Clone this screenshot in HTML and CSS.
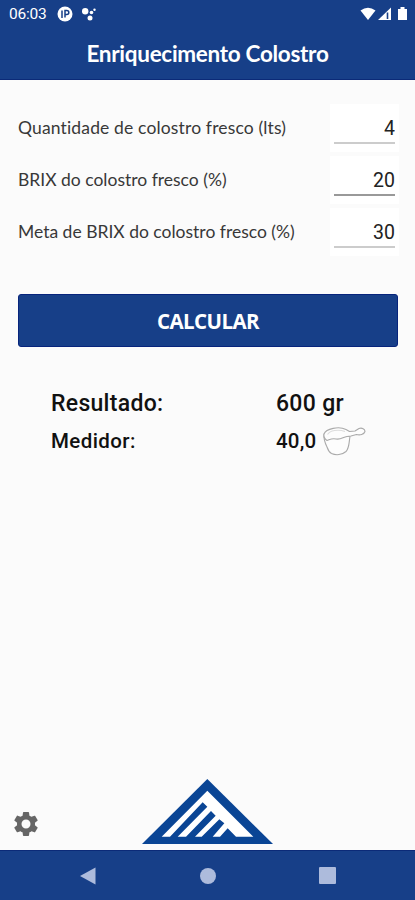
FILE: index.html
```html
<!DOCTYPE html>
<html lang="pt-BR">
<head>
    <meta charset="UTF-8">
    <meta name="viewport" content="width=device-width, initial-scale=1.0">
    <title>Enriquecimento Colostro</title>
    <link rel="stylesheet" href="styles.css">
</head>
<body>
    <div class="app">
        <div class="status-bar">
            <span class="clock">06:03</span>
            <svg class="status-app" width="16" height="16" viewBox="0 0 16 16">
                <circle cx="8" cy="8" r="7.5" fill="#fff"/>
                <path d="M5 12V4.500M8 11.500V4.500h1.800a2 2 0 0 1 0 4H8" fill="none" stroke="#173f88" stroke-width="1.500"/>
            </svg>
            <svg class="status-dots" width="16" height="16" viewBox="0 0 16 16">
                <g fill="#fff">
                    <circle cx="4.200" cy="5.200" r="3.200"/>
                    <circle cx="10.500" cy="6.500" r="1.800"/>
                    <circle cx="9" cy="12" r="2.500"/>
                    <circle cx="13.500" cy="3.700" r="1.200"/>
                </g>
            </svg>
            <div class="status-right">
                <svg width="48" height="16" viewBox="0 0 48 16">
                    <path d="M.5 4.500Q8 -1 15.500 4.500L8 14z" fill="#fff"/>
                    <path d="M18 14L31 1.500V14z" fill="#fff"/>
                    <path d="M27.500 6.500V13" stroke="#173f88" stroke-width="1.600"/>
                    <path d="M38 3h2.500V1h4v2H47v11h-9z" fill="#fff"/>
                </svg>
            </div>
        </div>

        <header class="header">
            <h1>Enriquecimento Colostro</h1>
        </header>

        <main class="content">
            <div class="field">
                <label class="label-first" for="quantidade">Quantidade de colostro fresco (lts)</label>
                <div class="input-box"><input id="quantidade" type="text" value="4"></div>
            </div>
            <div class="field">
                <label for="brix">BRIX do colostro fresco (%)</label>
                <div class="input-box"><input class="active" id="brix" type="text" value="20"></div>
            </div>
            <div class="field">
                <label for="meta">Meta de BRIX do colostro fresco (%)</label>
                <div class="input-box"><input id="meta" type="text" value="30"></div>
            </div>

            <button class="btn" type="button">CALCULAR</button>

            <div class="results">
                <div class="result-row result-main">
                    <span class="result-label">Resultado:</span>
                    <span>600 gr</span>
                </div>
                <div class="result-row">
                    <span class="result-label">Medidor:</span>
                    <span class="scoops">40,0</span>
                    <svg class="scoop" width="44" height="30" viewBox="0 0 44 30">
                        <g fill="#fdfdfd" stroke="#aaa" stroke-width="1.100" stroke-linejoin="round">
                            <path d="M2 8C1.500 13 3 17 5 21 6 24 7 26 9.500 27.500 14 29.500 20 29 24 25.500 27.500 22 27 15 28 10.500z"/>
                            <path d="M2 8C4 2.500 17 0 24 3.500L27.500 5.500 33 5 37 2.500C40 1.500 43 3 43 5.500 42 8.500 38 9.500 34.500 8.500L29 10 25 10.500C21 11 19 14 14 13 10 12 8 13.500 5 14.500 2 12.500 1.500 10.500 2 8z"/>
                            <path d="M5.500 8.500C8 4.500 16 3 23 5.500" fill="none" stroke="#ddd"/>
                        </g>
                    </svg>
                </div>
            </div>
        </main>

        <footer class="footer">
            <svg class="gear" width="30" height="30" viewBox="0 0 24 24">
                <path fill="#666" d="M19.140 12.940c.04-.3.060-.61.060-.94 0-.32-.02-.64-.07-.94l2.030-1.580c.18-.14.23-.41.12-.61l-1.920-3.320c-.12-.22-.37-.29-.59-.22l-2.390.96c-.5-.38-1.030-.7-1.620-.94l-.36-2.540c-.04-.24-.24-.41-.48-.41h-3.840c-.24 0-.43.17-.47.41l-.36 2.540c-.59.24-1.130.57-1.620.94l-2.390-.96c-.22-.08-.47 0-.59.22L2.740 8.870c-.12.21-.08.47.12.61l2.030 1.580c-.05.3-.09.63-.09.94s.02.64.07.94l-2.030 1.580c-.18.14-.23.41-.12.61l1.920 3.320c.12.22.37.29.59.22l2.390-.96c.5.38 1.030.7 1.620.94l.36 2.540c.05.24.24.41.48.41h3.840c.24 0 .44-.17.47-.41l.36-2.540c.59-.24 1.130-.56 1.620-.94l2.390.96c.22.08.47 0 .59-.22l1.920-3.320c.12-.22.07-.47-.12-.61l-2.010-1.580zM12 15.600a3.600 3.600 0 1 1 0-7.200 3.600 3.600 0 0 1 0 7.200z"/>
            </svg>
            <svg class="logo" width="131" height="65" viewBox="36 27 393 195">
                <path fill="#0a4595" d="M232 27L429 222H36z"/>
                <path fill="#fff" d="M95 200L232 62 370 200H318L293 175 270 200H248L283 160 268 148 215 200H195L257 137 243 123 168 200H143L232 110 218 97 120 200z"/>
            </svg>
        </footer>

        <nav class="nav-bar">
            <svg width="16" height="18" viewBox="0 0 16 18"><path d="M15.500.5v17L0 9z"/></svg>
            <svg width="16" height="16" viewBox="0 0 16 16"><circle cx="8" cy="8" r="8"/></svg>
            <svg width="17" height="17" viewBox="0 0 17 17"><rect width="17" height="17" rx="1"/></svg>
        </nav>
    </div>
</body>
</html>
```
FILE: styles.css
```css
* {
    margin: 0;
    padding: 0;
    box-sizing: border-box;
}

body {
    font-family: Roboto, sans-serif;
    background: #fbfbfb;
    color: #111;
}

.app {
    height: 900px;
    display: flex;
    flex-direction: column;
}

.status-bar {
    height: 28px;
    display: flex;
    align-items: center;
    background: #173f88;
    color: white;
    padding: 0 7px 1px 9px;
}

.clock {
    width: 48px;
    font-size: 15.5px;
    letter-spacing: -0.2px;
}

.status-dots {
    margin-left: 8px;
}

.status-right {
    margin-left: auto;
    height: 16px;
}

.header {
    height: 52px;
    background: #173f88;
    border-bottom: 1px solid #0b2a78;
    color: white;
    text-align: center;
}

h1 {
    font-family: Lato, sans-serif;
    font-size: 22.5px;
    font-weight: bold;
    line-height: 52px;
    letter-spacing: -0.3px;
}

.content {
    flex: 1;
    padding: 24px 17px 0 18px;
}

.field {
    display: flex;
    justify-content: space-between;
    height: 52px;
}

.field label {
    font-family: Lato, sans-serif;
    font-size: 17.5px;
    line-height: 47px;
    color: #383838;
    white-space: nowrap;
    font-variant-ligatures: none;
}

.field .label-first {
    letter-spacing: 0.15px;
}

.input-box {
    width: 69px;
    height: 48px;
    background: white;
    padding: 0 4px;
    margin-right: -1px;
}

.field input {
    width: 100%;
    height: 40px;
    border: none;
    border-bottom: 2px solid #ccc;
    padding-top: 10px;
    background: transparent;
    font-family: Roboto, sans-serif;
    font-size: 19.5px;
    text-align: right;
    color: #222;
    outline: none;
}

.field input.active {
    border-bottom-color: #999;
}

.btn {
    display: block;
    width: 100%;
    height: 53px;
    margin-top: 34px;
    background: #173f88;
    border: 1px solid #07247c;
    border-radius: 3px;
    color: white;
    font-family: "Open Sans", sans-serif;
    font-size: 20.5px;
    font-weight: bold;
    letter-spacing: -0.6px;
}

.results {
    padding: 38px 0 0 33px;
}

.result-row {
    display: flex;
    align-items: center;
    height: 37px;
    font-size: 20.5px;
    font-weight: 500;
    letter-spacing: 0.4px;
}

.result-main {
    font-size: 23px;
    letter-spacing: 0.3px;
}

.result-label {
    width: 225px;
}

.scoops {
    width: 41px;
    letter-spacing: 0.2px;
}

.scoop {
    margin-left: 5px;
}

.footer {
    height: 73px;
    display: flex;
    align-items: flex-start;
}

.gear {
    margin: 32px 0 0 11px;
}

.logo {
    margin: 2px 0 0 101px;
}

.nav-bar {
    height: 50px;
    display: flex;
    align-items: center;
    justify-content: space-between;
    padding: 0 79px 0 80px;
    background: #173f88;
    border-top: 1px solid #0b2a78;
    fill: #adbbdc;
}
```
